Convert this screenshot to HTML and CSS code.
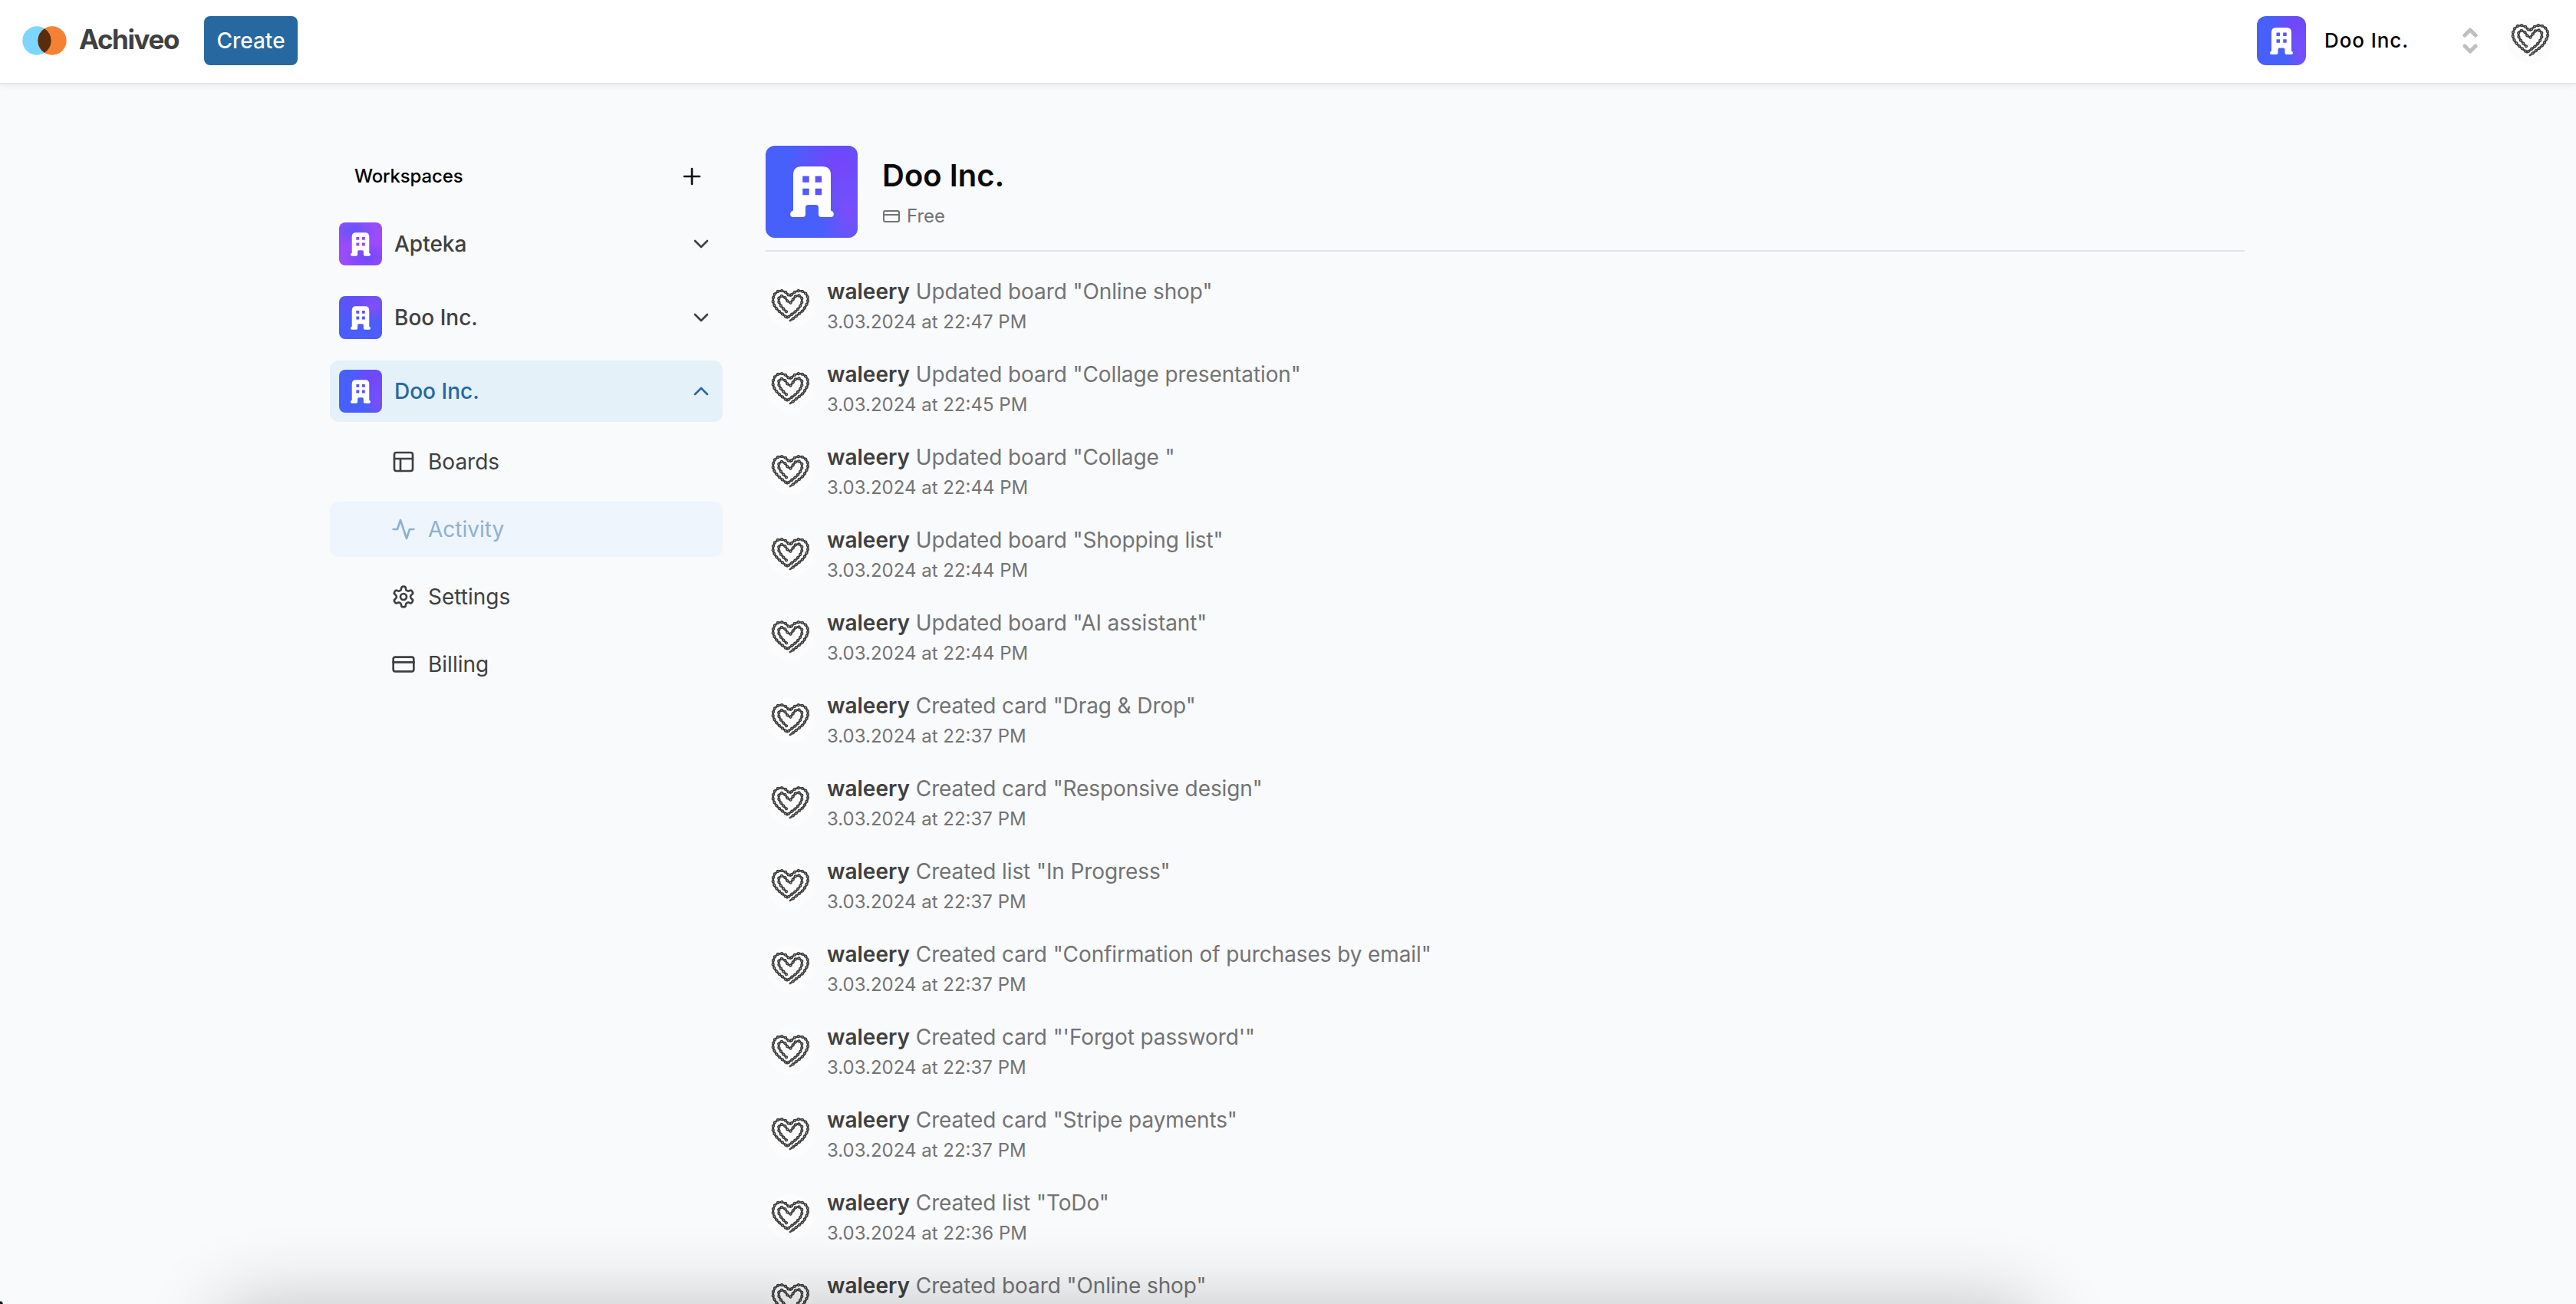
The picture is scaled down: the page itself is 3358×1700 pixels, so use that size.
FILE: index.html
```html
<!DOCTYPE html>
<html lang="en">
<head>
<meta charset="utf-8">
<title>Achiveo</title>
<link rel="stylesheet" href="styles.css">
</head>
<body>
<svg class="sprite" aria-hidden="true">
  <defs>
    <path id="chain" d="M25 37.300L21.300 33.700L17.700 29.300L15 24.300L15.300 19L19.300 16.700L23.700 19.300L26.300 23.300L30.300 26L33.300 22L36.300 17.700L41 16L45.300 19.300L45.300 25.300L42.700 31L38.700 35.700L34.300 39.300L29.700 42.700L26 45.300L22 42L17.700 38.700L13.700 35L10 30.300L7.700 25L7.700 19.700L10 14.300L14 11L19 10L24.300 12L27.300 15.300L30.700 16.700L33 14L36.700 11.300L41.700 10L46.700 11L51 14.300L53.300 19.300L53 25L50.300 30.300L47.300 35.300L42.700 39.300L38.300 42.700L34.300 46L30 49"/>
  </defs>
  <symbol id="building" viewBox="0 0 30 35">
    <path fill-rule="evenodd" d="M2 30.500V6Q2 0 8 0H22Q28 0 28 6V30.500Q30 31 30 33Q30 35 28 35H21.500Q19.500 35 19.500 33V28.500Q19.500 26.500 17.500 26.500H12.500Q10.500 26.500 10.500 28.500V33Q10.500 35 8.500 35H2Q0 35 0 33Q0 31 2 30.500ZM8.500 6.600V11H13V6.600ZM17.200 6.600V11H21.700V6.600ZM8.500 15.300V19.700H13V15.300ZM17.200 15.300V19.700H21.700V15.300Z"/>
  </symbol>
  <symbol id="heart" viewBox="0 0 60 60">
    <circle cx="30" cy="30" r="30" fill="#fcfcfd"/>
    <g fill="none" stroke-linejoin="round" stroke-linecap="round">
      <use href="#chain" class="chain"/>
      <use href="#chain" class="rollers"/>
      <use href="#chain" class="pins"/>
    </g>
  </symbol>
  <symbol id="card" viewBox="0 0 24 24"><rect x="2" y="5" width="20" height="14" rx="2"/><path d="M2 10h20"/></symbol>
</svg>

<header class="topbar">
  <a class="brand">
    <svg class="brand-mark" viewBox="0 0 58 38"><circle cx="19" cy="19" r="18.700" fill="#7dd6fd"/><circle cx="39" cy="19" r="18.700" fill="#f58234"/><path d="M29 3.200A18.700 18.700 0 0 1 29 34.800A18.700 18.700 0 0 1 29 3.200Z" fill="#592d0c"/></svg>
    <span class="brand-name">Achiveo</span>
  </a>
  <button class="create">Create</button>
  <div class="switcher">
    <span class="tile tile-doo tile-md"><svg><use href="#building"/></svg></span>
    <span class="switcher-name">Doo Inc.</span>
    <svg class="updown" viewBox="0 0 20 34"><path d="M3 10L10 3L17 10M3 24L10 31L17 24"/></svg>
  </div>
  <svg class="avatar"><use href="#heart"/></svg>
</header>

<main class="page">
  <nav class="sidebar">
    <div class="side-head"><span>Workspaces</span><svg class="plus" viewBox="0 0 24 24"><path d="M12 2V22M2 12H22"/></svg></div>
    <a class="space"><span class="tile tile-apteka"><svg><use href="#building"/></svg></span><span>Apteka</span><svg class="chev" viewBox="0 0 20 12"><path d="M2 2L10 10L18 2"/></svg></a>
    <a class="space"><span class="tile tile-boo"><svg><use href="#building"/></svg></span><span>Boo Inc.</span><svg class="chev" viewBox="0 0 20 12"><path d="M2 2L10 10L18 2"/></svg></a>
    <a class="space open"><span class="tile tile-doo"><svg><use href="#building"/></svg></span><span>Doo Inc.</span><svg class="chev" viewBox="0 0 20 12"><path d="M2 10L10 2L18 10"/></svg></a>
    <div class="subnav">
      <a class="sub"><svg class="icon" viewBox="0 0 24 24"><rect x="3" y="3" width="18" height="18" rx="2"/><path d="M3 9h18M9 21V9"/></svg>Boards</a>
      <a class="sub current"><svg class="icon" viewBox="0 0 24 24"><path d="M22 12h-4l-3 9L9 3l-3 9H2"/></svg>Activity</a>
      <a class="sub"><svg class="icon" viewBox="0 0 24 24"><path d="M12.220 2h-.44a2 2 0 0 0-2 2v.18a2 2 0 0 1-1 1.730l-.43.25a2 2 0 0 1-2 0l-.15-.08a2 2 0 0 0-2.730.73l-.22.38a2 2 0 0 0 .73 2.730l.15.1a2 2 0 0 1 1 1.720v.51a2 2 0 0 1-1 1.740l-.15.09a2 2 0 0 0-.73 2.730l.22.38a2 2 0 0 0 2.730.73l.15-.08a2 2 0 0 1 2 0l.43.25a2 2 0 0 1 1 1.730V20a2 2 0 0 0 2 2h.44a2 2 0 0 0 2-2v-.18a2 2 0 0 1 1-1.730l.43-.25a2 2 0 0 1 2 0l.15.08a2 2 0 0 0 2.730-.73l.22-.39a2 2 0 0 0-.73-2.730l-.15-.08a2 2 0 0 1-1-1.740v-.5a2 2 0 0 1 1-1.740l.15-.09a2 2 0 0 0 .73-2.730l-.22-.38a2 2 0 0 0-2.730-.73l-.15.08a2 2 0 0 1-2 0l-.43-.25a2 2 0 0 1-1-1.730V4a2 2 0 0 0-2-2z"/><circle cx="12" cy="12" r="3"/></svg>Settings</a>
      <a class="sub"><svg class="icon"><use href="#card"/></svg>Billing</a>
    </div>
  </nav>

  <section class="content">
    <div class="org">
      <span class="tile tile-doo tile-lg"><svg><use href="#building"/></svg></span>
      <div><h1>Doo Inc.</h1><p class="plan"><svg class="icon"><use href="#card"/></svg>Free</p></div>
    </div>
    <ol class="feed">
      <li><svg class="avatar"><use href="#heart"/></svg><div><p class="event"><b>waleery</b> Updated board "Online shop"</p><p class="date">3.03.2024 at 22:47 PM</p></div></li>
      <li><svg class="avatar"><use href="#heart"/></svg><div><p class="event"><b>waleery</b> Updated board "Collage presentation"</p><p class="date">3.03.2024 at 22:45 PM</p></div></li>
      <li><svg class="avatar"><use href="#heart"/></svg><div><p class="event"><b>waleery</b> Updated board "Collage "</p><p class="date">3.03.2024 at 22:44 PM</p></div></li>
      <li><svg class="avatar"><use href="#heart"/></svg><div><p class="event"><b>waleery</b> Updated board "Shopping list"</p><p class="date">3.03.2024 at 22:44 PM</p></div></li>
      <li><svg class="avatar"><use href="#heart"/></svg><div><p class="event"><b>waleery</b> Updated board "AI assistant"</p><p class="date">3.03.2024 at 22:44 PM</p></div></li>
      <li><svg class="avatar"><use href="#heart"/></svg><div><p class="event"><b>waleery</b> Created card "Drag &amp; Drop"</p><p class="date">3.03.2024 at 22:37 PM</p></div></li>
      <li><svg class="avatar"><use href="#heart"/></svg><div><p class="event"><b>waleery</b> Created card "Responsive design"</p><p class="date">3.03.2024 at 22:37 PM</p></div></li>
      <li><svg class="avatar"><use href="#heart"/></svg><div><p class="event"><b>waleery</b> Created list "In Progress"</p><p class="date">3.03.2024 at 22:37 PM</p></div></li>
      <li><svg class="avatar"><use href="#heart"/></svg><div><p class="event"><b>waleery</b> Created card "Confirmation of purchases by email"</p><p class="date">3.03.2024 at 22:37 PM</p></div></li>
      <li><svg class="avatar"><use href="#heart"/></svg><div><p class="event"><b>waleery</b> Created card "'Forgot password'"</p><p class="date">3.03.2024 at 22:37 PM</p></div></li>
      <li><svg class="avatar"><use href="#heart"/></svg><div><p class="event"><b>waleery</b> Created card "Stripe payments"</p><p class="date">3.03.2024 at 22:37 PM</p></div></li>
      <li><svg class="avatar"><use href="#heart"/></svg><div><p class="event"><b>waleery</b> Created list "ToDo"</p><p class="date">3.03.2024 at 22:36 PM</p></div></li>
      <li><svg class="avatar"><use href="#heart"/></svg><div><p class="event"><b>waleery</b> Created board "Online shop"</p></div></li>
    </ol>
  </section>
</main>
<div class="overlay"><div class="bottom-shade"></div></div>
</body>
</html>
```
FILE: styles.css
```css
* { box-sizing: border-box; margin: 0; padding: 0; }
body { height: 1700px; overflow: hidden; position: relative; background: #f9fafc; color: #404040; font: 500 28px/40px Inter, sans-serif; display: flex; flex-direction: column; }
.sprite { position: absolute; width: 0; height: 0; }
svg { flex: none; }

.topbar { height: 110px; flex: none; display: flex; align-items: center; padding: 0 30px 2px 29px; background: #fff; border-bottom: 2px solid #e5e5e5; box-shadow: 0 2px 8px rgba(0,0,0,.06); }
.brand { display: flex; align-items: center; gap: 16px; width: 237px; }
.brand-mark { width: 58px; height: 38px; }
.brand-name { font-size: 35px; font-weight: 700; letter-spacing: -1.4px; margin-top: -5px; }
.create { width: 122px; height: 64px; border: 0; border-radius: 8px; background: #26689f; color: #fafafa; font: 500 28px/40px Inter, sans-serif; }
.switcher { margin-left: auto; display: flex; align-items: center; width: 288px; margin-right: 38px; color: #000; font-size: 26px; letter-spacing: .9px; }
.switcher-name { margin-left: 24px; flex: 1; }
.updown { width: 20px; height: 34px; fill: none; stroke: #bfbfbf; stroke-width: 5; stroke-linecap: round; stroke-linejoin: round; }
.avatar { width: 60px; height: 60px; }
.chain { stroke: #484848; stroke-width: 2.700; }
.rollers { stroke: #3a3a3a; stroke-width: 4.300; stroke-dasharray: 0 5.200; }
.pins { stroke: #9c9c9c; stroke-width: 1.700; stroke-dasharray: 0 5.200; }

.tile { flex: none; display: flex; align-items: center; justify-content: center; width: 56px; height: 56px; border-radius: 8px; }
.tile svg { width: 26px; height: 31px; fill: #fff; }
.tile-md { width: 64px; height: 64px; border-radius: 12px; }
.tile-md svg { width: 30px; height: 35px; }
.tile-lg { width: 120px; height: 120px; border-radius: 12px; }
.tile-lg svg { width: 57px; height: 66px; }
.tile-doo { background: radial-gradient(ellipse 30% 60% at 90% 72%, #7d4cfb, transparent), radial-gradient(ellipse 55% 55% at 80% 22%, #7246fa 15%, transparent), #4860fb; }
.tile-boo { background: radial-gradient(circle at 80% 22%, #864df9, transparent 35%), radial-gradient(ellipse 70% 45% at 50% 15%, #6a4bfa, transparent), #4b5dfb; }
.tile-apteka { background: radial-gradient(ellipse 55% 35% at 32% 18%, #6455fa, transparent), radial-gradient(ellipse 55% 35% at 65% 82%, #6d4afa, transparent), #9b4bfa; }

.page { display: flex; padding: 80px 0 0 430px; gap: 56px; flex: 1; min-height: 0; overflow: hidden; }
.sidebar { width: 512px; display: flex; flex-direction: column; gap: 16px; }
.side-head { height: 72px; padding: 8px 28px 0 32px; display: flex; align-items: center; justify-content: space-between; font-size: 24px; letter-spacing: -.15px; color: #000; }
.plus { width: 24px; height: 24px; fill: none; stroke: #111; stroke-width: 2.600; stroke-linecap: round; }
.space { height: 80px; padding: 0 18px 0 12px; display: flex; align-items: center; gap: 16px; border-radius: 12px; }
.space.open { background: #e4f1f9; color: #26689f; }
.chev { width: 20px; height: 12px; margin-left: auto; fill: none; stroke: currentColor; stroke-width: 2.600; stroke-linecap: round; stroke-linejoin: round; }
.subnav { display: flex; flex-direction: column; gap: 16px; font-weight: 400; }
.sub { height: 72px; padding-left: 80px; display: flex; align-items: center; gap: 16px; border-radius: 12px; }
.sub.current { background: #eef5fc; color: #8fb1d0; }
.icon { width: 32px; height: 32px; fill: none; stroke: currentColor; stroke-width: 2; stroke-linecap: round; stroke-linejoin: round; }

.content { width: 1928px; }
.org { height: 138px; display: flex; gap: 32px; border-bottom: 2px solid #e2e4e7; }
.org h1 { font-size: 40px; line-height: 56px; font-weight: 600; color: #0a0a0a; margin-top: 11px; }
.plan { display: flex; align-items: center; gap: 8px; margin-top: 9px; font-size: 24px; line-height: 32px; font-weight: 400; color: #737373; }
.plan .icon { width: 24px; height: 24px; }
.feed { list-style: none; margin-top: 32px; }
.feed li { height: 108px; display: flex; align-items: flex-start; gap: 18px; padding-left: 2px; }
.feed .avatar { margin-top: 9px; }
.event { font-weight: 400; color: #737373; white-space: pre; letter-spacing: -.1px; }
.event b { font-weight: 600; color: #404040; letter-spacing: 0; }
.date { margin-top: 4px; font-size: 24px; line-height: 32px; font-weight: 400; color: #737373; }

.overlay { position: absolute; inset: 0; overflow: hidden; pointer-events: none; background: radial-gradient(circle at 0 100%, #0b1a0b 3px, transparent 4.500px); }
.bottom-shade { position: absolute; left: 290px; top: 1702px; width: 2360px; height: 200px; border-radius: 20px; box-shadow: 0 0 100px rgba(0,0,0,.24); }
```
